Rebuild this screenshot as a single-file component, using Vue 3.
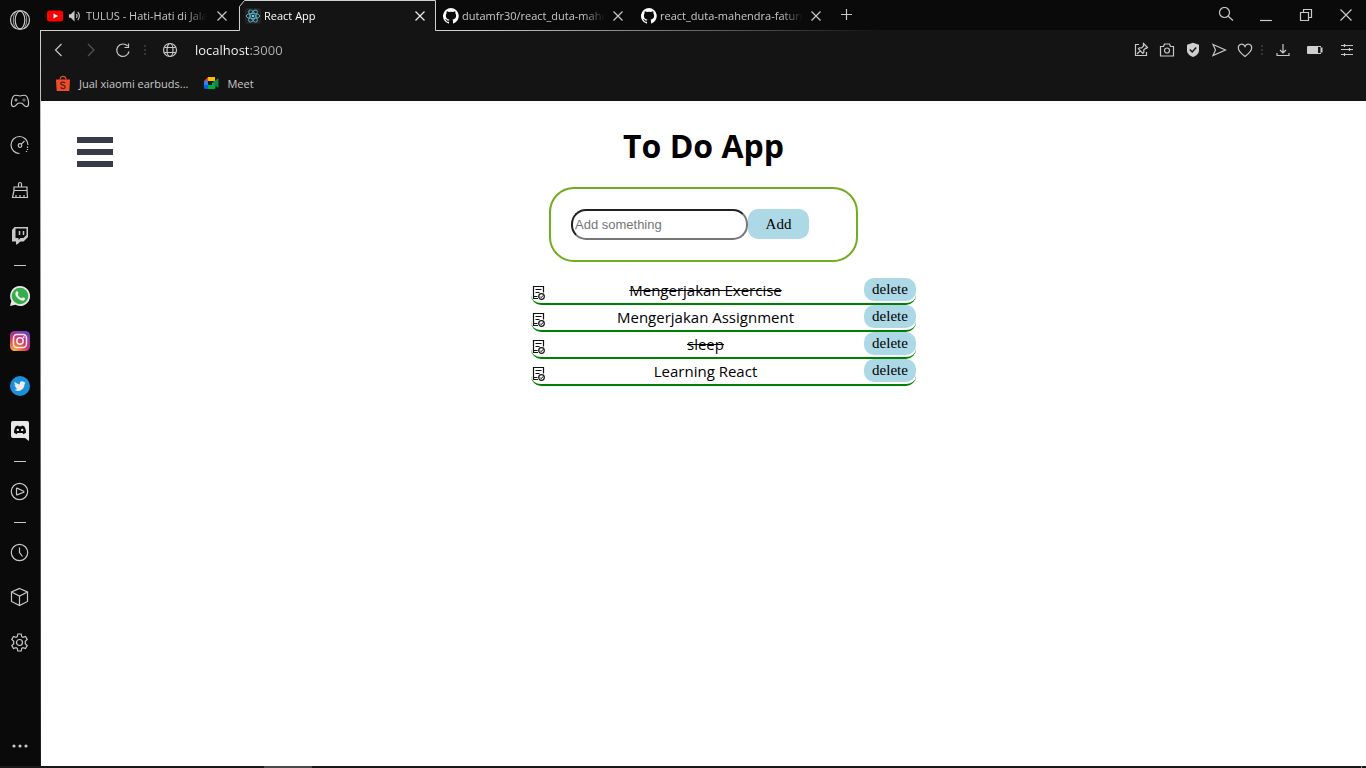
<script setup>
import { ref } from 'vue'

const address = ref('localhost:3000')
const draft = ref('')
const todos = ref([
  { id: 1, text: 'Mengerjakan Exercise', done: true },
  { id: 2, text: 'Mengerjakan Assignment', done: false },
  { id: 3, text: 'sleep', done: true },
  { id: 4, text: 'Learning React', done: false }
])

function add() {
  const text = draft.value.trim()
  if (!text) return
  todos.value.push({ id: Date.now(), text, done: false })
  draft.value = ''
}
function remove(id) {
  todos.value = todos.value.filter((t) => t.id !== id)
}
</script>

<template>
  <div class="browser">
    <nav class="sidebar" aria-label="Sidebar">
      <button class="side first" aria-label="Opera menu">
        <svg viewBox="0 0 24 24" class="line"><circle cx="12" cy="12" r="9.5" /><ellipse cx="12" cy="12" rx="4.8" ry="8.8" /><path d="M8 3.6C4.4 8 4.4 16 8 20.4M16 3.6c3.600 4.400 3.600 12.400 0 16.800" stroke-width="0.8" /></svg>
      </button>
      <button class="side" aria-label="GX Corner">
        <svg viewBox="0 0 24 24" class="line"><path d="M6.500 7.500C9 6.600 9.500 8 12 8s3-1.400 5.500-.5c1.600.6 2.300 2.500 2.800 5 .5 2.600.4 5.400-1.300 6-1.900.6-3-1-4-2.300-.7-.9-1.200-1.200-3-1.200s-2.300.3-3 1.200c-1 1.300-2.100 2.900-4 2.300-1.700-.6-1.800-3.400-1.300-6 .5-2.500 1.200-4.400 2.800-5z" /><path d="M6.500 12h3M8 10.500v3M14.500 12h1M16.500 12h1M16 10.500v1M16 12.500v1" stroke-width="1" /></svg>
      </button>
      <button class="side" aria-label="GX Control">
        <svg viewBox="0 0 24 24" class="line"><path d="M11.500 20.500A8.500 8.500 0 1 1 20 12" /><circle cx="12" cy="12.500" r="1.800" /><path d="M13.300 11.200L16.500 8" /><path d="M19.500 13.500v1.500M19.500 16v1M18.500 18v1" /></svg>
      </button>
      <button class="side" aria-label="GX Cleaner">
        <svg viewBox="0 0 24 24" class="line"><path d="M10.500 9V6q0-1.500 1.500-1.500T13.500 6v3M6 12.500V9h13v3.500zM6 12.500L4.500 19.500h15L19 12.500M8 19.500V17M12 19.500V17M16 19.500V17" /></svg>
      </button>
      <button class="side" aria-label="Twitch">
        <svg viewBox="0 0 24 24"><path fill="#c8c8c8" fill-rule="evenodd" d="M6.500 4H20v10l-4.500 4.500h-3L9 21.500H8v-3H4V7zM7.500 5.500V15h3v2l2-2h3l3-3V5.500z" /><path d="M11.500 8v4M15.500 8v4" stroke="#c8c8c8" stroke-width="1.500" /></svg>
      </button>
      <hr class="rule" />
      <button class="side" aria-label="WhatsApp">
        <svg viewBox="0 0 24 24"><path fill="#e8e8e8" d="M12 2a10 10 0 1 1-4.700 18.800L2 22l1.400-5A10 10 0 0 1 12 2z" /><circle cx="12" cy="12" r="8.300" fill="#35ad48" /><path fill="#eee" d="M8.500 7.200c.6-.4 1-.2 1.300.5l.6 1.500c.2.600-.7 1.100-.7 1.600.8 1.600 2 2.700 3.700 3.400.6 0 1-1.200 1.600-.9l1.700.8c.8.4.1 1.900-.7 2.300-2.100 1-4.800-.7-6.500-2.400S6.300 9 8.500 7.200z" /></svg>
      </button>
      <button class="side" aria-label="Instagram">
        <svg viewBox="0 0 24 24">
          <defs>
            <radialGradient id="insta" cx="0.2" cy="1" r="1.200"><stop offset="0" stop-color="#f7b944" /><stop offset="0.3" stop-color="#ec6a3c" /><stop offset="0.6" stop-color="#c9307c" /><stop offset="1" stop-color="#5b45c6" /></radialGradient>
          </defs>
          <rect x="2" y="2" width="20" height="20" rx="4.500" fill="url(#insta)" /><rect x="5.500" y="5.500" width="13" height="13" rx="3.500" fill="none" stroke="#eee" stroke-width="1.500" /><circle cx="12" cy="12" r="3.200" fill="none" stroke="#eee" stroke-width="1.500" /><circle cx="15.800" cy="8.200" r="0.900" fill="#eee" /></svg>
      </button>
      <button class="side" aria-label="Twitter">
        <svg viewBox="0 0 24 24"><circle cx="12" cy="12" r="10" fill="#1c8fdc" /><path fill="#eee" d="M17.800 8.500c-.4.200-.9.300-1.400.4.500-.3.900-.8 1.100-1.300-.5.300-1 .5-1.500.6a2.400 2.400 0 0 0-4.200 2.200c-2-.1-3.800-1.100-5-2.600-.6 1.100-.3 2.500.8 3.200-.4 0-.8-.1-1.100-.3 0 1.200.8 2.200 1.900 2.400-.3.100-.7.100-1.100 0 .3 1 1.200 1.700 2.300 1.700A4.900 4.900 0 0 1 6 15.800c4.800 3 10.600-.2 10.600-6.100.5-.3.900-.8 1.200-1.200z" /></svg>
      </button>
      <button class="side" aria-label="Discord">
        <svg viewBox="0 0 24 24"><path fill="#e8e8e8" d="M5 2h14a2 2 0 0 1 2 2v18l-4-3H5a2 2 0 0 1-2-2V4a2 2 0 0 1 2-2z" /><path fill="#0a0a0a" fill-rule="evenodd" d="M7.800 7.200L10 6.600l.5.700h3l.5-.7 2.200.6c1.200 1.700 1.900 4 1.800 6.500l-2.600 1.500-.9-1.200h-5l-.9 1.200L6 13.700c-.1-2.500.6-4.800 1.800-6.500zM9.800 9.700a1.200 1.200 0 1 0 0 2.400 1.200 1.200 0 0 0 0-2.400zm4.400 0a1.200 1.200 0 1 0 0 2.400 1.200 1.200 0 0 0 0-2.400z" /></svg>
      </button>
      <hr class="rule" />
      <button class="side" aria-label="Player">
        <svg viewBox="0 0 24 24" class="line"><circle cx="11.500" cy="11.500" r="8.200" /><path d="M8.500 8.700v5.600q0 .6.600.5l6.500-2.600q.7-.5 0-1L9.100 8.200q-.6-.1-.6.500z" /></svg>
      </button>
      <hr class="rule" />
      <button class="side" aria-label="History">
        <svg viewBox="0 0 24 24" class="line"><circle cx="11.500" cy="11.500" r="8.200" /><path d="M11.500 6.500v5l3 4" /></svg>
      </button>
      <button class="side" aria-label="Extensions">
        <svg viewBox="0 0 24 24" class="line"><path d="M11.500 2.500l8 3.500v9.500l-8 4-8-4V6zM3.500 6l8 4 8-4M11.500 10v9.500" /></svg>
      </button>
      <button class="side" aria-label="Settings">
        <svg viewBox="0 0 24 24" class="line"><path d="M9.800 3h3.400l.5 2.600 1.300.8 2.500-.9 1.700 3-1.900 1.700v2.600l1.900 1.700-1.700 3-2.500-.9-1.300.8-.5 2.600H9.800l-.5-2.600-1.300-.8-2.500.9-1.700-3 1.900-1.700v-2.600L3.800 8.500l1.700-3 2.500.9 1.300-.8z" /><circle cx="11.500" cy="11.500" r="3" /></svg>
      </button>
      <button class="side more" aria-label="More">
        <svg viewBox="0 0 24 24"><g fill="#c8c8c8"><circle cx="6" cy="12" r="1.600" /><circle cx="12" cy="12" r="1.600" /><circle cx="18" cy="12" r="1.600" /></g></svg>
      </button>
    </nav>

    <div class="window">
      <header class="tabs">
        <div class="tab lead">
          <svg class="fav" viewBox="0 0 16 16"><rect y="2.500" width="16" height="11" rx="2.500" fill="#f00" /><path d="M6.500 5.500v5L11 8z" fill="#fff" /></svg>
          <svg class="sound" viewBox="0 0 14 14"><path d="M1 5h2l4-4v12L3 9H1z" fill="#c8c8c8" /><path d="M9 5q1.500 2 0 4M10.500 2.500q3.500 4.500 0 9" fill="none" stroke="#c8c8c8" stroke-width="1.200" /></svg>
          <button class="title">TULUS - Hati-Hati di Jala</button>
          <button class="close" aria-label="Close tab"><svg viewBox="0 0 12 12" class="line"><path d="M1.500 1.500l9 9M10.500 1.500l-9 9" /></svg></button>
        </div>
        <div class="tab active">
          <svg class="outline" viewBox="0 0 198 31"><path d="M0 30.500H.5V6.500L6.500.5H197.500V31H0z" fill="#141414" /><path d="M0 30.500H1.500V6.500L6.500.5H197.500V30.500" fill="none" stroke="#cfcfcf" /></svg>
          <svg class="fav" viewBox="0 0 16 16"><rect width="16" height="16" rx="2" fill="#222" /><g fill="none" stroke="#58b4ca" stroke-width="0.900"><ellipse cx="8" cy="8" rx="6.800" ry="2.600" /><ellipse cx="8" cy="8" rx="6.800" ry="2.600" transform="rotate(60 8 8)" /><ellipse cx="8" cy="8" rx="6.800" ry="2.600" transform="rotate(120 8 8)" /></g><circle cx="8" cy="8" r="1.300" fill="#61dafb" /></svg>
          <button class="title">React App</button>
          <button class="close" aria-label="Close tab"><svg viewBox="0 0 12 12" class="line"><path d="M1.500 1.500l9 9M10.500 1.500l-9 9" /></svg></button>
        </div>
        <div v-for="name in ['dutamfr30/react_duta-mahe', 'react_duta-mahendra-faturr']" :key="name" class="tab">
          <svg class="fav" viewBox="0 0 16 16"><path fill="#fff" d="M8 0a8 8 0 0 0-2.500 15.600c.4.100.5-.2.500-.4v-1.500c-2.200.5-2.700-1-2.700-1-.4-.9-.9-1.200-.9-1.200-.7-.5.1-.5.1-.5.8.1 1.200.8 1.200.8.700 1.200 1.900.9 2.300.7.100-.5.300-.9.500-1.100-1.800-.2-3.600-.9-3.600-4 0-.9.300-1.600.8-2.100-.1-.2-.4-1 .1-2.100 0 0 .7-.2 2.200.8a7.500 7.500 0 0 1 4 0c1.500-1 2.200-.8 2.200-.8.4 1.100.2 1.900.1 2.100.5.600.8 1.300.8 2.100 0 3.100-1.900 3.800-3.700 4 .3.300.6.800.6 1.500v2.200c0 .2.100.5.500.4A8 8 0 0 0 8 0z" /></svg>
          <button class="title">{{ name }}</button>
          <button class="close" aria-label="Close tab"><svg viewBox="0 0 12 12" class="line"><path d="M1.500 1.500l9 9M10.500 1.500l-9 9" /></svg></button>
        </div>
        <button class="newtab" aria-label="New tab"><svg viewBox="0 0 12 12" class="line"><path d="M6.500 0v11M1 5.500h11" /></svg></button>
        <div class="controls">
          <button aria-label="Search tabs"><svg viewBox="0 0 16 16" class="line"><circle cx="6.500" cy="5.500" r="5" /><path d="M10.200 9.200l4.800 4.300" /></svg></button>
          <button aria-label="Minimize"><svg viewBox="0 0 16 16" class="line"><path d="M2 13.500h12" /></svg></button>
          <button aria-label="Restore"><svg viewBox="0 0 16 16" class="line"><path d="M2.500 5.500h8v8h-8zM5.500 5.500v-3h8v8h-3" /></svg></button>
          <button aria-label="Close window"><svg viewBox="0 0 16 16" class="line"><path d="M2.500 2.500l11 11M13.500 2.500l-11 11" /></svg></button>
        </div>
      </header>

      <div class="toolbar">
        <button class="tool" aria-label="Back"><svg viewBox="0 0 16 16" class="line"><path d="M10.500 2L4.500 8l6 6" /></svg></button>
        <button class="tool dim" aria-label="Forward"><svg viewBox="0 0 16 16" class="line"><path d="M5 2l6 6-6 6" /></svg></button>
        <button class="tool" aria-label="Reload"><svg viewBox="0 0 16 16" class="line"><path d="M14 9.500A6.200 6.200 0 1 1 12.500 4M13.500 1.500v4h-4" /></svg></button>
        <span class="dots"></span>
        <button class="tool globe" aria-label="Site information"><svg viewBox="0 0 16 16" class="line"><circle cx="8" cy="8" r="6.500" /><ellipse cx="8" cy="8" rx="3" ry="6.500" /><path d="M2.500 5.500h11M2.500 10.500h11" /></svg></button>
        <input v-model="address" class="address" type="text" aria-label="Address" />
        <div class="actions">
          <button aria-label="Pin"><svg viewBox="0 0 16 16" class="line"><path d="M6 2.500H2.500v11h11V10" /><path d="M10.500 1.500l4 4-1 .8-.8-.2-2 2 .2 2.200-1 1-4.500-4.500 1-1 2.200.2 2-2-.2-.9zM7.200 8.800L4 12" /></svg></button>
          <button aria-label="Snapshot"><svg viewBox="0 0 16 16" class="line"><path d="M1.500 4.500h3l1-2.500h5l1 2.500h3v9.500h-13z" /><circle cx="8" cy="8.500" r="2.500" /></svg></button>
          <button aria-label="Ad blocker"><svg viewBox="0 0 16 16"><path d="M8 .8l6 2v5.700c0 3.200-2.800 5.200-6 6.500-3.200-1.300-6-3.300-6-6.500V2.800z" fill="#cfcfcf" /><path d="M4.800 7.500L7.200 10l4-4.500" fill="none" stroke="#141414" stroke-width="1.500" /></svg></button>
          <button aria-label="My Flow"><svg viewBox="0 0 16 16" class="line"><path d="M2 2.500L14.500 8 2 13.500 4.500 8z" /></svg></button>
          <button aria-label="Bookmark"><svg viewBox="0 0 16 16" class="line"><path d="M8 14.500C4 11.500 1.300 9 1.300 5.800 1.300 1.800 6.500.800 8 4.500c1.500-3.700 6.700-2.700 6.700 1.300C14.700 9 12 11.500 8 14.500z" /></svg></button>
          <span class="dots"></span>
          <button class="wide" aria-label="Downloads"><svg viewBox="0 0 16 16" class="line"><path d="M8 2v9M5 8l3 3 3-3M2 11v2.500h12V11" /></svg></button>
          <button class="wide" aria-label="Battery saver"><svg viewBox="0 0 16 16"><path d="M1 4h13v1.500h1.500v5H14V12H1q-1 0-1-1V5q0-1 1-1z" fill="#cfcfcf" /><path d="M11 5h2.500v6H11z" fill="#141414" /></svg></button>
          <button class="wide" aria-label="Easy setup"><svg viewBox="0 0 16 16" class="line"><path d="M2 3.500h12M2 7.500h12M2 12.500h12M5.500 2v3M10.500 6v3M5.500 11v3" /></svg></button>
        </div>
      </div>

      <nav class="bookmarks" aria-label="Bookmarks">
        <a href="#"><svg viewBox="0 0 16 16"><path d="M1 4.500h14l-.7 11.500H1.700z" fill="#ee4d2d" /><path d="M5 4.500C5 .2 11 .2 11 4.500" fill="none" stroke="#ee4d2d" stroke-width="1.200" /><path d="M10.200 8C8.500 6.500 5.500 6.800 5.800 8.700s4.500 1.200 4.400 3.300c-.1 2-3.200 1.900-4.700.6" fill="none" stroke="#5d1d12" stroke-width="1.300" /></svg>Jual xiaomi earbuds...</a>
        <a href="#"><svg viewBox="0 0 16 16"><path d="M5 2h7v4H5z" fill="#fbbc05" /><path d="M1 6l4-4v4z" fill="#ea4335" /><path d="M1 6h4v4H1z" fill="#2684fc" /><path d="M1 10h4v4H2.500Q1 14 1 12.500z" fill="#0066da" /><path d="M5 10h4V8l3.500-3v7.500q0 1.500-1.500 1.500H5z" fill="#00ac47" /><path d="M10 8l4.500-4.500q1-.5 1 .5v8q0 1-1 .5z" fill="#14853d" /></svg>Meet</a>
      </nav>

      <main class="page">
        <button class="burger" aria-label="Open menu"><span></span><span></span><span></span></button>
        <div class="todo">
          <h1>To Do App</h1>
          <form class="entry" @submit.prevent="add">
            <input v-model="draft" type="text" placeholder="Add something" aria-label="New task" />
            <button type="submit">Add</button>
          </form>
          <ul>
            <li v-for="todo in todos" :key="todo.id">
              <button class="toggle" aria-label="Toggle done" @click="todo.done = !todo.done">
                <svg viewBox="0 0 14 16" fill="none" stroke="#111"><path d="M6 13.500H1.500V1.500h10v6M3.500 4.500h6M3.500 7.500h4M1.500 11.500h4" stroke-width="1.200" /><circle cx="9.500" cy="11.500" r="2.800" stroke-width="1.200" /><path d="M8 11.500l1.200 1.200 2-2.400" /></svg>
              </button>
              <span :class="{ done: todo.done }">{{ todo.text }}</span>
              <button class="delete" @click="remove(todo.id)">delete</button>
            </li>
          </ul>
        </div>
      </main>
    </div>
    <footer class="taskbar"><i class="running"></i><i class="edge"></i></footer>
  </div>
</template>

<style>
body {
  background: #fff;
}
</style>

<style scoped>
.browser {
  display: grid;
  grid-template-columns: 40px minmax(0, 1fr);
  grid-template-rows: minmax(0, 1fr) 2px;
  min-height: 100vh;
  font-family: "Open Sans", "Noto Sans", sans-serif;
  font-size: 11px;
  color: #c8c8c8;
}
.browser * {
  box-sizing: border-box;
}
button {
  display: grid;
  place-items: center;
  margin: 0;
  padding: 0;
  border: 0;
  background: none;
  color: inherit;
  font: inherit;
}
svg {
  display: block;
}
.line {
  fill: none;
  stroke: #c8c8c8;
  stroke-width: 1.2;
}

.sidebar {
  display: flex;
  flex-direction: column;
  background: #0a0a0a;
}
.side {
  width: 40px;
  height: 45px;
}
.side svg {
  width: 24px;
  height: 24px;
}
.side.first {
  height: 40px;
  margin-bottom: 37px;
}
.side.more {
  height: 40px;
  margin-top: auto;
}
.rule {
  width: 12px;
  margin: 8px auto 7px 14px;
  border: 0;
  border-top: 1px solid #c8c8c8;
}

.window {
  display: flex;
  flex-direction: column;
  background: linear-gradient(#cfcfcf, #888 40%, #141414) 0 30px / 1px 100% no-repeat #0a0a0a;
}
.tabs {
  display: flex;
  height: 31px;
  background: linear-gradient(90deg, #cfcfcf 430px, #141414 840px) 0 100% / 100% 1px no-repeat #0a0a0a;
}
.tab {
  position: relative;
  display: flex;
  align-items: center;
  gap: 3px;
  width: 198px;
  padding: 0 10px 0 7px;
}
.tab.lead {
  gap: 5px;
}
.tab > * {
  position: relative;
}
.tab .outline {
  position: absolute;
  inset: 0;
  width: 198px;
  height: 31px;
}
.fav {
  flex: none;
  width: 16px;
  height: 16px;
}
.sound {
  flex: none;
  width: 13px;
  height: 14px;
}
.title {
  display: block;
  flex: 1;
  overflow: hidden;
  text-align: left;
  white-space: nowrap;
  mask-image: linear-gradient(90deg, #000 calc(100% - 26px), transparent calc(100% - 4px));
}
.active .title {
  color: #fff;
}
.close svg,
.newtab svg {
  width: 12px;
  height: 12px;
}
.active .line {
  stroke: #eee;
}
.newtab {
  width: 28px;
  height: 30px;
}
.controls {
  display: flex;
  margin-left: auto;
}
.controls button {
  width: 40px;
  height: 30px;
}
.controls svg {
  width: 16px;
  height: 16px;
}

.toolbar {
  display: flex;
  align-items: center;
  height: 38px;
  margin-left: 1px;
  padding: 0 3px 0 2px;
  background: #141414;
}
.tool {
  width: 32px;
  height: 32px;
}
.tool svg,
.actions svg {
  width: 16px;
  height: 16px;
}
.dim {
  opacity: 0.35;
}
.dots {
  width: 2px;
  height: 10px;
  margin: 0 5px;
  background: repeating-linear-gradient(#34343c 0 2px, transparent 2px 4px);
}
.actions .dots {
  margin: 0 4px 0 3px;
}
.globe {
  margin-left: 3px;
}
.address {
  flex: 1;
  min-width: 0;
  height: 28px;
  padding: 0 9px;
  border: 0;
  outline: 0;
  font: 13px "Open Sans", "Noto Sans", sans-serif;
  color: #fff;
  background: linear-gradient(90deg, #fff 64px, #b4b4b4 64px) text;
  -webkit-text-fill-color: transparent;
}
.actions {
  display: flex;
  align-items: center;
}
.actions button {
  width: 26px;
  height: 28px;
}
.actions .wide {
  width: 32px;
}

.bookmarks {
  display: flex;
  gap: 15px;
  height: 32px;
  margin-left: 1px;
  padding: 0 14px 4px;
  background: #141414;
}
.bookmarks a {
  display: flex;
  align-items: center;
  gap: 8px;
  color: #c8c8c8;
  text-decoration: none;
}
.bookmarks svg {
  width: 16px;
  height: 16px;
}

.page {
  display: grid;
  flex: 1;
  align-items: start;
  margin-left: 1px;
  background: #fff;
  color: #000;
  font-size: 15px;
}
.page > * {
  grid-area: 1 / 1;
}
.burger {
  justify-self: start;
  width: 36px;
  gap: 6px;
  margin: 36px;
  z-index: 1;
}
.burger span {
  width: 36px;
  height: 6px;
  background: #373a47;
}
.todo {
  display: flex;
  flex-direction: column;
  align-items: center;
}
h1 {
  margin: 23px 0 19px;
  font-size: 32px;
  line-height: 44px;
  font-weight: 700;
}
.entry {
  display: flex;
  align-items: flex-start;
  width: 309px;
  padding: 20px;
  border: 2px solid #72ac20;
  border-radius: 25px;
}
.entry input {
  width: 177px;
  height: 31px;
  padding: 1px 2px;
  border: 2px inset #767676;
  border-radius: 15px;
  background: #fff;
  font: 13px "Liberation Sans", Arial, sans-serif;
}
.entry input::placeholder {
  color: #757575;
}
.entry button,
.delete {
  border-radius: 10px;
  background: lightblue;
  font: 15px "Liberation Serif", "Times New Roman", serif;
  color: #000;
}
.entry button {
  width: 61px;
  height: 30px;
}
ul {
  width: 385px;
  margin: 16px 0 0 40px;
  padding: 0;
  list-style: none;
}
li {
  display: flex;
  justify-content: space-between;
  height: 27px;
  border-bottom: 2px solid green;
  border-radius: 10px;
  line-height: 24px;
}
.toggle {
  align-self: flex-end;
  width: 16px;
  height: 20px;
}
.toggle svg {
  width: 14px;
  height: 16px;
}
.done {
  text-decoration: line-through;
}
.delete {
  width: 52px;
  height: 23px;
}

.taskbar {
  display: flex;
  justify-content: space-between;
  grid-column: 1 / -1;
  padding: 0 4px 0 264px;
  background: #1a181b;
}
.running {
  width: 48px;
  background: #4a484b;
}
.edge {
  width: 1px;
  background: #888;
}
</style>
